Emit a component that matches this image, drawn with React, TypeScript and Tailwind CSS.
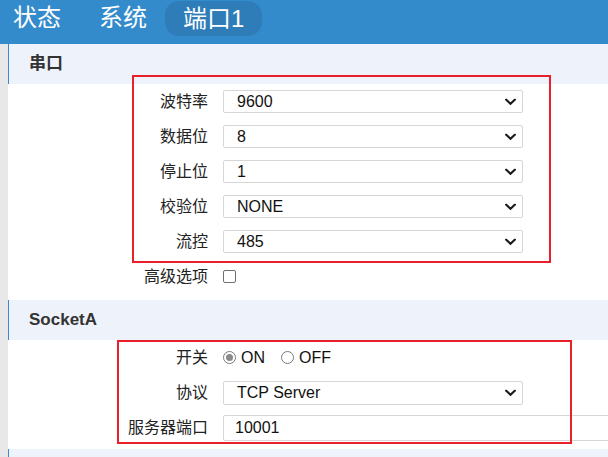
import React from 'react';

const font = { fontFamily: '"Liberation Sans", "Noto Sans CJK SC", sans-serif' };

const Chevron: React.FC = () => (
  <svg className="absolute right-[6px] top-1/2 -translate-y-1/2 w-[11px] h-[7px]" viewBox="0 0 11 7" fill="none">
    <path d="M1.2 1.2L5.5 5.3L9.8 1.2" stroke="#1a1a1a" strokeWidth="2.2" strokeLinecap="square" />
  </svg>
);

const SelectBox: React.FC<{ value: string; h?: string }> = ({ value, h = 'h-[23px]' }) => (
  <div className={`relative w-[300px] ${h} border border-[#d6d6d6] rounded-[2px] bg-white flex items-center pl-[13px] text-[16px] text-[#111]`}>
    {value}
    <Chevron />
  </div>
);

const Row: React.FC<{ label: string; children: React.ReactNode }> = ({ label, children }) => (
  <div className="h-[35px] flex items-center">
    <div className="w-[200px] shrink-0 text-right text-[16px] text-[#222]">{label}</div>
    <div className="ml-[15px] shrink-0 flex items-center">{children}</div>
  </div>
);

const SectionHeader: React.FC<{ title: string }> = ({ title }) => (
  <div className="h-[40px] bg-[#eef2fa] border-l border-[#3d86d8] flex items-center pl-[20px] text-[17px] font-bold text-[#333]">
    {title}
  </div>
);

const Radio: React.FC<{ checked?: boolean; label: string }> = ({ checked, label }) => (
  <div className="flex items-center">
    <span className="w-[13px] h-[13px] rounded-full border border-[#7a7a7a] flex items-center justify-center bg-white">
      {checked && <span className="w-[7px] h-[7px] rounded-full bg-[#8a8a8a]" />}
    </span>
    <span className="ml-[5px] text-[16px] text-[#111]">{label}</span>
  </div>
);

export default function App() {
  const serial = [
    ['波特率', '9600'],
    ['数据位', '8'],
    ['停止位', '1'],
    ['校验位', 'NONE'],
    ['流控', '485'],
  ];

  return (
    <div className="relative w-[608px] h-[457px] overflow-hidden bg-white" style={font}>
      {/* Top nav */}
      <div className="h-[44px] bg-[#348bcc]">
        <div className="h-[36px] flex items-center text-white text-[24px]">
          <span className="ml-[13px]">状态</span>
          <span className="ml-[38px]">系统</span>
          <span className="ml-[18px] h-[35px] mt-[1px] px-[18px] rounded-[14px] bg-[#2e7db9] flex items-center">端口1</span>
        </div>
      </div>

      <div className="flex h-[413px]">
        <div className="w-[8px] shrink-0 bg-[#e8e8e8]" />
        <div className="flex-1 min-w-0">
          <SectionHeader title="串口" />
          {serial.map(([label, value]) => (
            <Row key={label} label={label}>
              <SelectBox value={value} />
            </Row>
          ))}
          <Row label="高级选项">
            <span className="w-[13px] h-[13px] border border-[#6f6f6f] rounded-[2px] bg-white" />
          </Row>
          <div className="h-[6px]" />

          <SectionHeader title="SocketA" />
          <Row label="开关">
            <div className="flex items-center gap-[16px]">
              <Radio checked label="ON" />
              <Radio label="OFF" />
            </div>
          </Row>
          <Row label="协议">
            <SelectBox value="TCP Server" h="h-[24px]" />
          </Row>
          <Row label="服务器端口">
            <div className="w-[420px] h-[26px] border border-[#d6d6d6] rounded-[2px] bg-white flex items-center pl-[11px] text-[16px] text-[#111]">
              10001
            </div>
          </Row>
          <div className="h-[4px]" />
          <SectionHeader title="" />
        </div>
      </div>

      {/* annotation boxes */}
      <div className="absolute left-[132px] top-[75px] w-[419px] h-[188px] border-2 border-[#e8202a] pointer-events-none" />
      <div className="absolute left-[117px] top-[340px] w-[455px] h-[104px] border-2 border-[#e8202a] pointer-events-none" />
    </div>
  );
}
